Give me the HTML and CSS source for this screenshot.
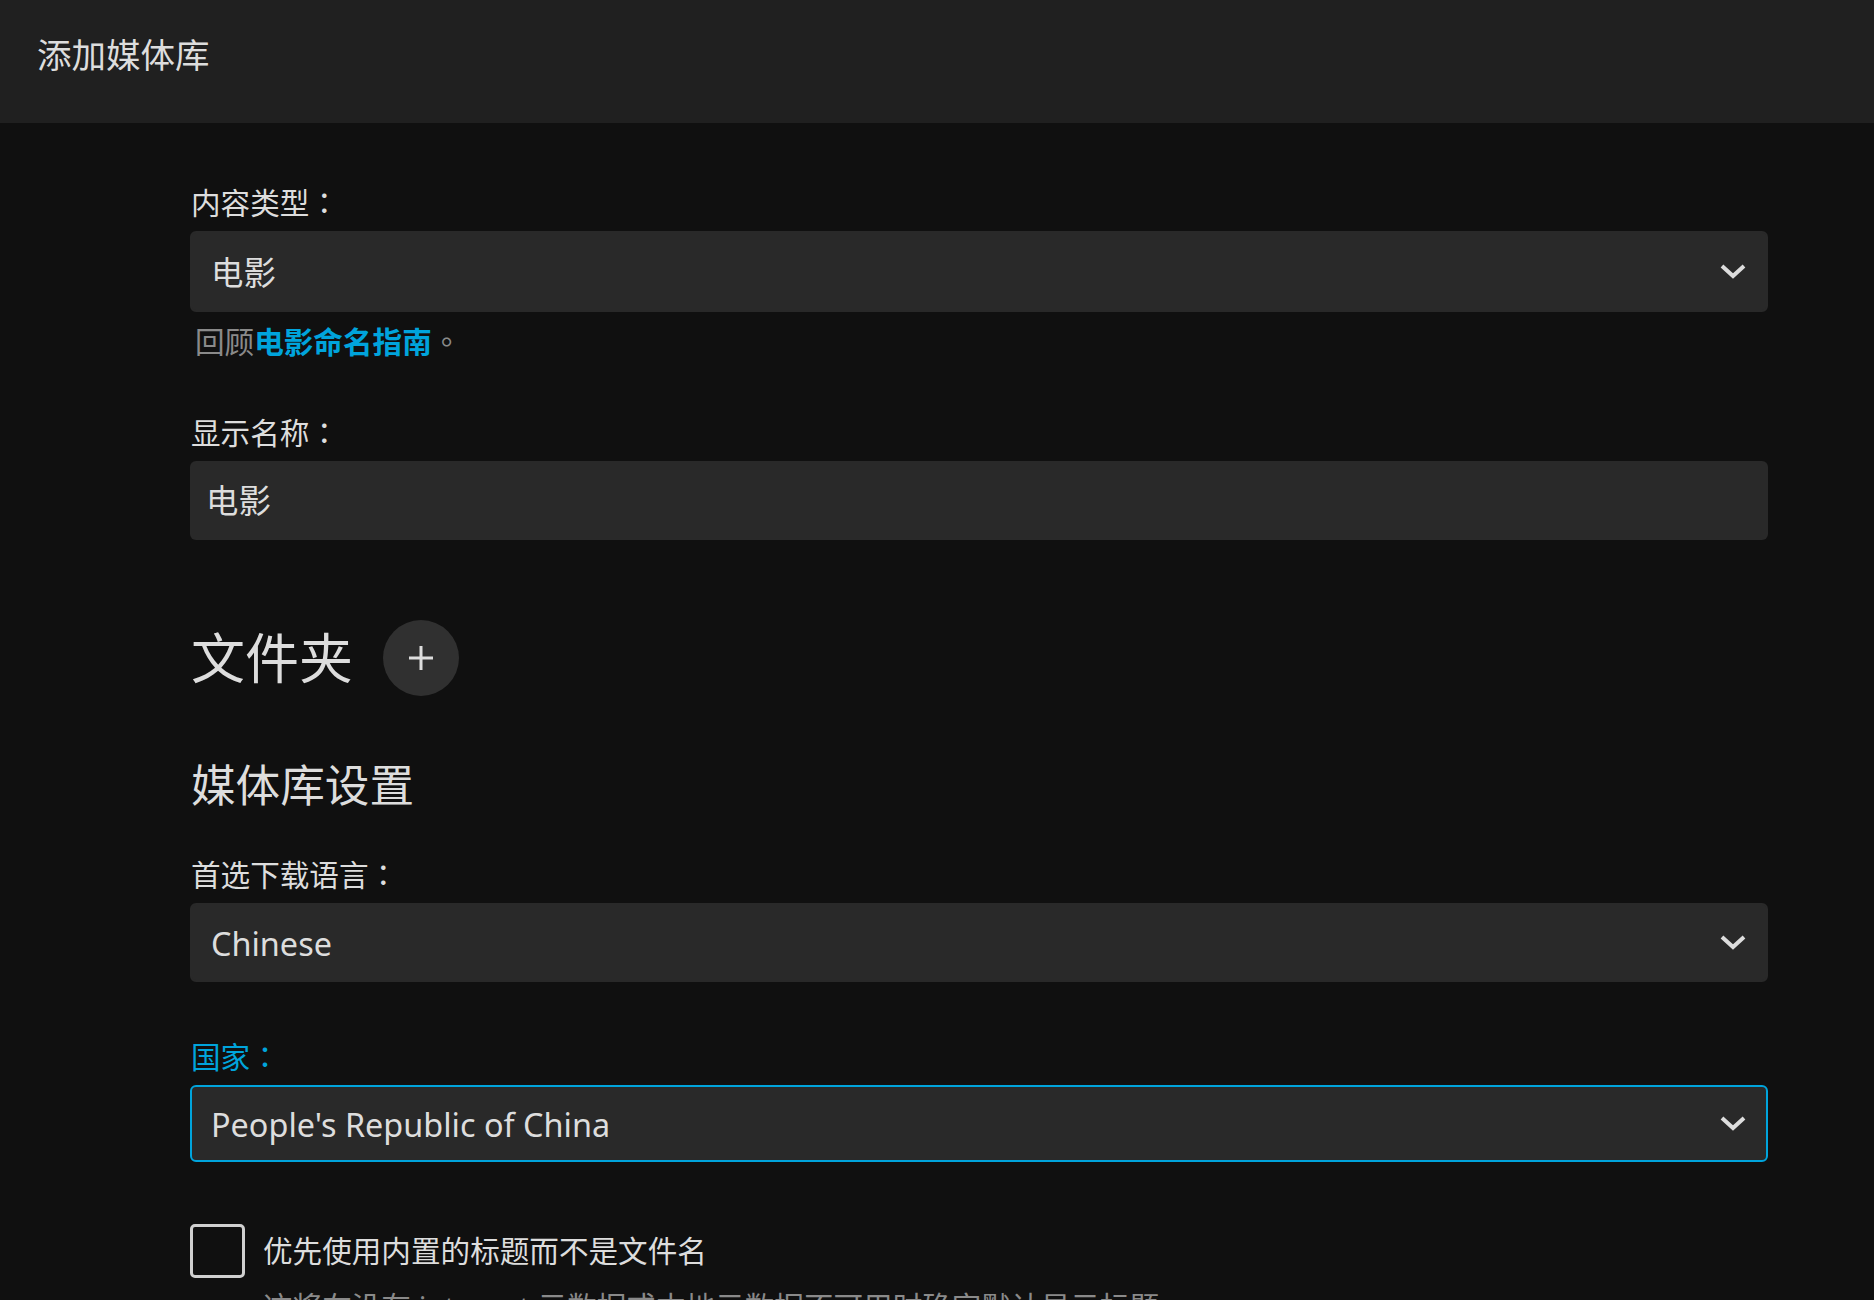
FILE: index.html
```html
<!DOCTYPE html>
<html>
	<head>
		<meta charset="utf-8">
		<title>添加媒体库</title>
		<link rel="stylesheet" href="styles.css">
	</head>
	<body>
		<div class="header">
			<h1 class="headerTitle">添加媒体库</h1>
		</div>

		<div class="content">
			<div class="field">
				<div class="fieldLabel">内容类型<span class="punct">：</span></div>
				<div class="selectBox selectFirst">
					<span class="selectText">电影</span>
					<svg class="chevron" width="26" height="15" viewBox="0 0 26 15"><polyline points="2,2 13,12 24,2" /></svg>
				</div>
				<div class="fieldHelp">回顾<a href="#" class="helpLink">电影命名指南</a><span class="punct">。</span></div>
			</div>

			<div class="field fieldName">
				<div class="fieldLabel">显示名称<span class="punct">：</span></div>
				<div class="inputBox">电影</div>
			</div>

			<div class="folders">
				<h2 class="sectionTitle">文件夹</h2>
				<button class="addButton" type="button">
					<svg width="26" height="26" viewBox="0 0 26 26"><path d="M13 1 V25 M1 13 H25" /></svg>
				</button>
			</div>

			<h2 class="settingsTitle">媒体库设置</h2>

			<div class="field">
				<div class="fieldLabel">首选下载语言<span class="punct">：</span></div>
				<div class="selectBox">
					<span class="selectText">Chinese</span>
					<svg class="chevron" width="26" height="15" viewBox="0 0 26 15"><polyline points="2,2 13,12 24,2" /></svg>
				</div>
			</div>

			<div class="field fieldCountry">
				<div class="fieldLabel focused">国家<span class="punct">：</span></div>
				<div class="selectBox selectFocused">
					<span class="selectText">People's Republic of China</span>
					<svg class="chevron" width="26" height="15" viewBox="0 0 26 15"><polyline points="2,2 13,12 24,2" /></svg>
				</div>
			</div>

			<div class="checkboxRow">
				<span class="checkbox"></span>
				<span class="checkboxLabel">优先使用内置的标题而不是文件名</span>
			</div>
			<div class="checkboxHelp">这将在没有 internet 元数据或本地元数据不可用时确定默认显示标题</div>
		</div>
	</body>
</html>
```

FILE: styles.css
```css
html, body {
	margin: 0;
	height: 100%;
	overflow: hidden;
}

body {
	background: #101010;
	color: #dddddd;
	font-family: "Noto Sans", "Noto Sans CJK SC", sans-serif;
}

/* centred full-width punctuation, as on the device */
.punct {
	font-family: "Noto Sans CJK TC", sans-serif;
	line-height: 0;
}

.header {
	height: 123px;
	box-sizing: border-box;
	padding: 32px 0 0 37px;
	background: #202020;
}

.headerTitle {
	margin: 0;
	font-size: 34.5px;
	font-weight: normal;
	line-height: 46px;
	color: #dddddd;
}

.content {
	width: 1578px;
	padding: 60px 0 0 190px;
}

.fieldLabel {
	height: 40px;
	font-size: 29.6px;
	line-height: 40px;
	margin-bottom: 8px;
	padding-left: 1px;
}

.fieldLabel.focused {
	color: #00a4dc;
}

.selectBox {
	display: flex;
	align-items: center;
	justify-content: space-between;
	height: 79px;
	box-sizing: border-box;
	padding: 0 20px 0 19px;
	background: #292929;
	border-radius: 6px;
	border: 2px solid #292929;
}

.selectFirst {
	height: 81px;
}

.selectFocused {
	height: 77px;
	border-color: #00a4dc;
}

.selectText {
	font-size: 32.4px;
	line-height: 40px;
}

.chevron polyline {
	fill: none;
	stroke: #dddddd;
	stroke-width: 4;
}

.fieldHelp {
	height: 40px;
	margin-top: 10px;
	padding-left: 5px;
	font-size: 29.6px;
	line-height: 40px;
	color: #8a8a8a;
}

.helpLink {
	color: #00a4dc;
	font-weight: bold;
	text-decoration: none;
}

.fieldName {
	margin-top: 51px;
}

.inputBox {
	height: 79px;
	box-sizing: border-box;
	padding: 0 16px;
	background: #292929;
	border-radius: 6px;
	font-size: 32.4px;
	line-height: 79px;
}

.folders {
	display: flex;
	align-items: center;
	gap: 30px;
	margin-top: 80px;
}

.sectionTitle {
	margin: 0;
	font-size: 54px;
	font-weight: normal;
	line-height: 76px;
	padding-left: 1px;
}

.addButton {
	width: 76px;
	height: 76px;
	border: 0;
	border-radius: 50%;
	background: #303030;
	display: flex;
	align-items: center;
	justify-content: center;
	padding: 0;
}

.addButton path {
	stroke: #dddddd;
	stroke-width: 3;
}

.settingsTitle {
	margin: 62px 0 0 0;
	font-size: 44.6px;
	font-weight: normal;
	line-height: 54px;
	padding-left: 1px;
}

.settingsTitle + .field {
	margin-top: 43px;
}

.fieldCountry {
	margin-top: 55px;
}

.checkboxRow {
	display: flex;
	align-items: center;
	gap: 18px;
	margin-top: 62px;
}

.checkbox {
	width: 55px;
	height: 54px;
	box-sizing: border-box;
	border: 3.5px solid #d0d0d0;
	border-radius: 5px;
}

.checkboxLabel {
	font-size: 29.6px;
	line-height: 40px;
}

.checkboxHelp {
	height: 40px;
	margin-top: 9px;
	padding-left: 73px;
	font-size: 29.6px;
	line-height: 40px;
	color: #8a8a8a;
}
```
